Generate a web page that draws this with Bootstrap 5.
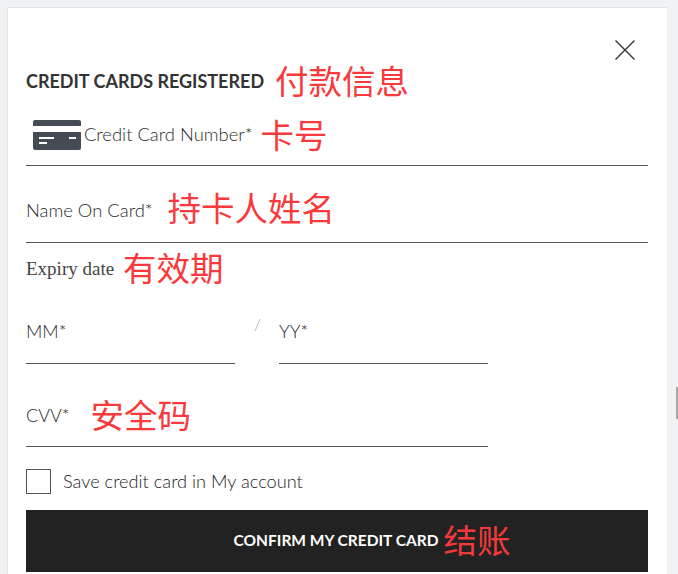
<!DOCTYPE html>
<html lang="en">
<head>
<meta charset="utf-8">
<title>Credit card</title>
<link rel="stylesheet" href="https://cdn.jsdelivr.net/npm/bootstrap@5.3.0/dist/css/bootstrap.min.css">
<style>
html, body { height: 100%; overflow: hidden; }
body { background: #f1f2f3; font-family: Lato, "Liberation Sans", sans-serif; color: #444; }
.page-shell { height: 574px; padding: 7px 11px 0 7px; }
.sheet { height: 567px; background: #fff; border-top: 1px solid #e2e2e2; border-left: 1px solid #e6e6e6; padding: 0 19px 0 18px; overflow: hidden; }
.note { font-family: "Noto Sans CJK SC", sans-serif; color: #f93a3d; font-size: 33.5px; line-height: 38px; font-weight: 400; white-space: nowrap; }
.close-row { height: 54px; padding: 32px 13px 0 0; }
.x-btn { width: 20px; height: 20px; display: block; background: none; border: 0; padding: 0; }
.x-btn svg { display: block; }
.title-row { height: 38px; gap: 11px; }
.title-text { font-size: 18px; font-weight: 700; color: #333; margin: 2px 0 0; white-space: nowrap; }
.title-note { margin-bottom: 2px; }
.line-field { border-bottom: 1px solid #555; font-size: 18.4px; color: #2b2b2b; font-weight: 300; }
.field-card { height: 66px; padding-top: 15px; gap: 8px; }
.card-box { margin-top: 5px; }
.card-glyph { margin: 0 3px 0 7px; flex: none; }
.field-name { height: 77px; padding-top: 22px; gap: 15px; }
.name-label { padding-top: 9px; }
.expiry-row { height: 53px; gap: 9px; }
.expiry-text { font-family: "Liberation Serif", serif; font-size: 19px; color: #444; }
.expiry-note { margin-bottom: 5px; }
.date-row { height: 68px; }
.date-item { width: 209px; height: 68px; padding-bottom: 18px; font-size: 18px; }
.slash { width: 44px; font-size: 16px; color: #999; padding: 0 0 28px 19px; font-weight: 300; }
.field-cvv { width: 462px; height: 83px; padding-top: 30px; gap: 21px; font-size: 18px; }
.cvv-label { padding-top: 8px; }
.cvv-note { margin-top: 1px; }
.save-row { height: 63px; gap: 12px; padding-top: 6px; }
.box-mark { width: 25px; height: 25px; border: 1px solid #555; background: #fff; flex: none; border-radius: 0; margin: 0; appearance: none; }
.save-text { font-size: 18.2px; font-weight: 300; color: #222; margin: 0; }
.pay-btn { height: 62px; width: 100%; background: #222; border: 0; border-radius: 0; gap: 5px; color: #fff; font-weight: 700; font-size: 15.5px; padding: 0; }
.pay-btn::before { content: ""; width: 65px; }
.pay-btn:hover { background: #222; color: #fff; }
.pay-btn .note { color: #f33a3a; margin-bottom: 4px; }
.rail { position: fixed; top: 387px; right: 0; width: 2px; height: 32px; background: #a8a8a8; }
</style>
</head>
<body>
<div class="page-shell">
  <div class="sheet">
    <div class="close-row d-flex justify-content-end">
      <button class="x-btn" type="button" aria-label="Close">
        <svg width="20" height="20" viewBox="0 0 20 20"><path d="M0.5 0.5 19.5 19.5M19.5 0.5 0.5 19.5" stroke="#333" stroke-width="1.4" fill="none"/></svg>
      </button>
    </div>
    <div class="title-row d-flex align-items-center">
      <h2 class="title-text">CREDIT CARDS REGISTERED</h2>
      <span class="note title-note">付款信息</span>
    </div>
    <div class="line-field field-card d-flex align-items-start">
      <div class="card-box d-flex align-items-center">
        <svg class="card-glyph" width="48" height="30" viewBox="0 0 48 30"><path d="M2 0H46a2 2 0 0 1 2 2V6H0V2a2 2 0 0 1 2-2ZM0 12H48V28a2 2 0 0 1-2 2H2a2 2 0 0 1-2-2Z" fill="#454b55"/><path d="M6 17H21V19H6ZM36 17H43V19H36ZM6 22H14V24H6Z" fill="#fff"/></svg>
        <span>Credit Card Number*</span>
      </div>
      <span class="note">卡号</span>
    </div>
    <div class="line-field field-name d-flex align-items-start">
      <span class="name-label">Name On Card*</span>
      <span class="note">持卡人姓名</span>
    </div>
    <div class="expiry-row d-flex align-items-center">
      <span class="expiry-text">Expiry date</span>
      <span class="note expiry-note">有效期</span>
    </div>
    <div class="date-row d-flex">
      <div class="line-field date-item d-flex align-items-end">MM*</div>
      <div class="slash d-flex align-items-end">/</div>
      <div class="line-field date-item d-flex align-items-end">YY*</div>
    </div>
    <div class="line-field field-cvv d-flex align-items-start">
      <span class="cvv-label">CVV*</span>
      <span class="note cvv-note">安全码</span>
    </div>
    <div class="save-row d-flex align-items-center">
      <input class="box-mark" type="checkbox" id="save">
      <label class="save-text" for="save">Save credit card in My account</label>
    </div>
    <button class="pay-btn btn d-flex align-items-center justify-content-center" type="button">
      <span>CONFIRM MY CREDIT CARD</span>
      <span class="note">结账</span>
    </button>
  </div>
</div>
<div class="rail"></div>
<script src="https://cdn.jsdelivr.net/npm/bootstrap@5.3.0/dist/js/bootstrap.bundle.min.js"></script>
</body>
</html>
